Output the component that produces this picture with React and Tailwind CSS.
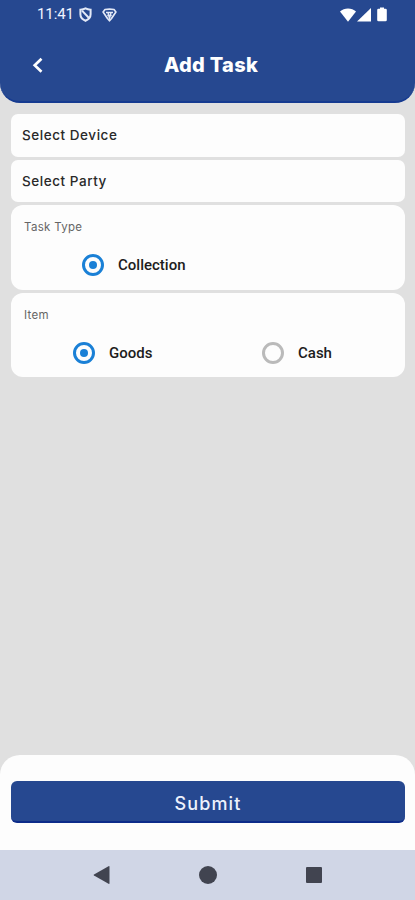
const StatusBar = () => (
  <div className="flex h-[29px] items-center justify-between pl-[37px] pr-[28px]">
    <div className="flex items-center">
      <span className="w-[37px] whitespace-nowrap font-['Roboto',sans-serif] text-[15px] leading-none tracking-[-0.1px] text-[#f0f4ff]">
        11:41
      </span>
      <svg className="ml-[5px] h-[15px] w-[13px]" viewBox="0 0 13 15" fill="none" stroke="#e3e9f7" strokeWidth="2">
        <path d="M6.5 1.400C8.200 2.400 10 2.700 11.600 2.800v4.500c0 3.100-2.100 5.300-5.100 6.500-3-1.200-5.100-3.400-5.100-6.500V2.800C3 2.700 4.800 2.400 6.500 1.400z" />
        <path d="M3 3.600 10 11" />
      </svg>
      <svg className="ml-[10px] h-[14px] w-[15px]" viewBox="0 0 15 14" fill="none" stroke="#e3e9f7" strokeWidth="1.700" strokeLinejoin="round">
        <path d="M3 1.500Q7.500.7 12 1.500L13.900 4 9.500 10.500 7.500 12.800 5.500 10.500 1.100 4z" />
        <path d="M4 4.500h7M5.300 7.500h4.400M6 4.500l1.500 6 1.500-6" strokeWidth="1.400" />
      </svg>
    </div>
    <div className="flex items-center">
      <svg className="h-[14px] w-[16px]" viewBox="0 0 16 14" fill="#ffffff">
        <path d="M0 3.600C2.200 1.600 5 .5 8 .5s5.800 1.100 8 3.100L8 13.800z" />
      </svg>
      <svg className="ml-[1px] h-[14px] w-[14px]" viewBox="0 0 14 14" fill="#ffffff">
        <path d="M14 0v13.500H0z" />
      </svg>
      <svg className="ml-[6px] h-[15px] w-[10px]" viewBox="0 0 10 15" fill="#ffffff">
        <path d="M3 .5h4v1.300h1.500q1.300 0 1.300 1.300v9.800q0 1.300-1.300 1.300h-7Q.2 14.200.2 12.900V3.100q0-1.300 1.300-1.300H3z" />
      </svg>
    </div>
  </div>
);

const Header = () => (
  <header className="h-[103px] shrink-0 rounded-b-[20px] border-b-2 border-[#153a90] bg-[#264890]">
    <StatusBar />
    <div className="grid h-[72px] grid-cols-[1fr_auto_1fr] items-center px-[32px]">
      <button type="button" aria-label="Back" className="flex w-[12px]">
        <svg className="h-[17px] w-[12px]" viewBox="0 0 12 17" fill="none" stroke="#ffffff" strokeWidth="2.7">
          <path d="M9.500 1.800 2.700 8.300l6.800 6.500" />
        </svg>
      </button>
      <h1 className="pl-[7px] text-[20px] font-extrabold leading-none tracking-[0.3px] text-white">Add Task</h1>
    </div>
  </header>
);

const SelectField = ({ label }) => (
  <button
    type="button"
    className="flex h-[42.5px] w-full items-center rounded-[7px] bg-[#fdfdfd] px-[11px] text-left text-[13.5px] font-medium tracking-[0.55px] text-[#292929]"
  >
    {label}
  </button>
);

const Radio = ({ label, checked }) => (
  <label className="flex items-center gap-[14px]">
    <span
      className={`flex size-[22px] items-center justify-center rounded-full border-[3px] ${
        checked ? "border-[#1a80d6]" : "border-[#bababa]"
      }`}
    >
      {checked && <span className="size-[8px] rounded-full bg-[#1a80d6]" />}
    </span>
    <span className="pt-[1px] font-['Roboto',sans-serif] text-[15px] font-medium leading-none text-[#1c1c1c]">
      {label}
    </span>
  </label>
);

const RadioCard = ({ title, children }) => (
  <section className="h-[84.5px] rounded-[12px] bg-[#fdfdfd] px-[13px] pt-[15px]">
    <h2 className="text-[11.5px] leading-[15px] tracking-[0.3px] text-[#666666]">{title}</h2>
    <div className="flex h-[60px] items-center">{children}</div>
  </section>
);

const NavigationBar = () => (
  <nav className="flex h-[50px] shrink-0 items-center justify-center gap-[89px] bg-[#d0d6e6] pr-[1px]">
    <svg className="h-[20px] w-[17px]" viewBox="0 0 17 20" fill="#414450">
      <path d="M15.500 1.200q1-.4 1 .6v16.400q0 1-1 .6L1 10.600q-1-.6 0-1.200z" />
    </svg>
    <span className="size-[18px] rounded-full bg-[#414450]" />
    <span className="size-[16px] rounded-[1px] bg-[#414450]" />
  </nav>
);

const App = () => {
  return (
    <div className="flex h-[900px] w-[415px] flex-col overflow-hidden bg-[#e0e0e0] font-['Inter',sans-serif]">
      <Header />

      <main className="flex flex-1 flex-col gap-[3px] pl-[11px] pr-[10px] pt-[11px]">
        <SelectField label="Select Device" />
        <SelectField label="Select Party" />
        <RadioCard title="Task Type">
          <div className="pl-[58px]">
            <Radio label="Collection" checked />
          </div>
        </RadioCard>
        <RadioCard title="Item">
          <div className="w-[238px] pl-[49px]">
            <Radio label="Goods" checked />
          </div>
          <Radio label="Cash" />
        </RadioCard>
      </main>

      <footer className="h-[95px] shrink-0 rounded-t-[20px] bg-[#fdfdfd] pl-[11px] pr-[10px] pt-[26px]">
        <button
          type="button"
          className="h-[42px] w-full rounded-[6px] border-b-2 border-[#0d2c8a] bg-[#264890] pt-[5px] text-[18px] font-medium leading-none tracking-[1.100px] text-[#edf1fc]"
        >
          Submit
        </button>
      </footer>
      <NavigationBar />
    </div>
  );
};

export default App;
